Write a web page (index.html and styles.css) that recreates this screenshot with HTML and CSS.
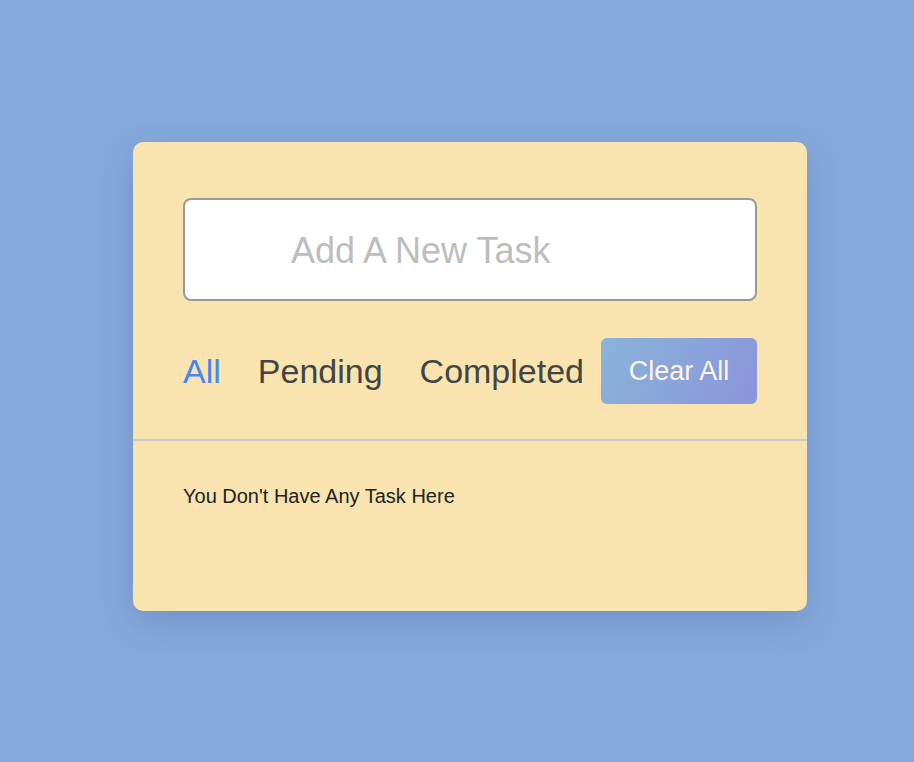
FILE: index.html
```html
<!DOCTYPE html>
<html lang="en">
<head>
<meta charset="utf-8">
<title>Todo</title>
<link rel="stylesheet" href="styles.css">
</head>
<body>
<div class="page">
  <div class="card">
    <div class="top">
      <input class="task-input" type="text" placeholder="Add A New Task">
      <div class="controls">
        <span class="filter active">All</span>
        <span class="filter">Pending</span>
        <span class="filter">Completed</span>
        <button class="clear">Clear All</button>
      </div>
    </div>
    <div class="list">
      <p class="empty">You Don't Have Any Task Here</p>
    </div>
  </div>
</div>
</body>
</html>
```
FILE: styles.css
```css
* { box-sizing: border-box; }
html, body {
  margin: 0;
  padding: 0;
  height: 100%;
}
body {
  background: #86a9dc;
  font-family: "Liberation Sans", Arial, Helvetica, sans-serif;
}
.page {
  padding-top: 142px;
  padding-left: 133px;
}
.card {
  width: 674px;
  height: 469px;
  background: #f9e4b0;
  border-radius: 10px;
  box-shadow: 0 12px 34px rgba(40, 60, 110, 0.2);
}
.top {
  padding: 56px 50px 35px;
  border-bottom: 2px solid #c8cbd4;
}
.task-input {
  display: block;
  width: 100%;
  height: 103px;
  border: 2px solid #999;
  border-radius: 8px;
  background: #fff;
  font-family: inherit;
  font-size: 36px;
  padding: 2px 0 0 106px;
  outline: none;
}
.task-input::placeholder {
  color: #bdbdbd;
}
.controls {
  display: flex;
  align-items: center;
  margin-top: 37px;
}
.filter {
  font-size: 34px;
  color: #444;
  margin-right: 37px;
}
.filter:nth-child(3) {
  margin-right: 0;
}
.filter.active {
  color: #4a86f0;
}
.clear {
  margin-left: auto;
  width: 156px;
  height: 66px;
  border: none;
  border-radius: 6px;
  background: linear-gradient(120deg, #8ab4da 0%, #8a94da 100%);
  color: #fdf5e2;
  font-family: inherit;
  font-size: 27px;
  padding: 0;
}
.list {
  padding: 44px 50px;
}
.empty {
  margin: 0;
  font-size: 20px;
  color: #222;
}
```
